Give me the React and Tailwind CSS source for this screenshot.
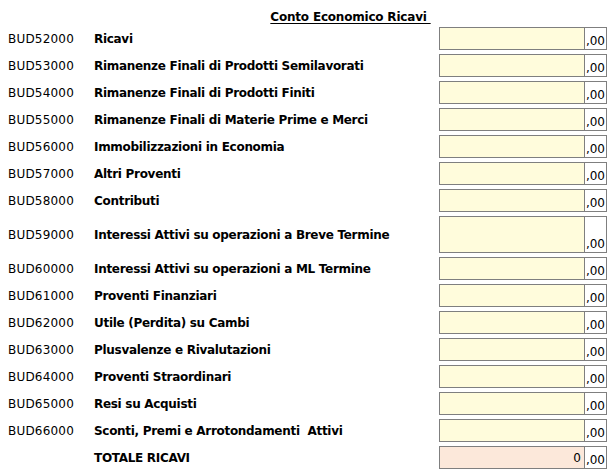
import React from 'react';

const voci = [
  { codice: 'BUD52000', descrizione: 'Ricavi' },
  { codice: 'BUD53000', descrizione: 'Rimanenze Finali di Prodotti Semilavorati' },
  { codice: 'BUD54000', descrizione: 'Rimanenze Finali di Prodotti Finiti' },
  { codice: 'BUD55000', descrizione: 'Rimanenze Finali di Materie Prime e Merci' },
  { codice: 'BUD56000', descrizione: 'Immobilizzazioni in Economia' },
  { codice: 'BUD57000', descrizione: 'Altri Proventi' },
  { codice: 'BUD58000', descrizione: 'Contributi' },
  { codice: 'BUD59000', descrizione: 'Interessi Attivi su operazioni a Breve Termine', alto: true },
  { codice: 'BUD60000', descrizione: 'Interessi Attivi su operazioni a ML Termine' },
  { codice: 'BUD61000', descrizione: 'Proventi Finanziari' },
  { codice: 'BUD62000', descrizione: 'Utile (Perdita) su Cambi' },
  { codice: 'BUD63000', descrizione: 'Plusvalenze e Rivalutazioni' },
  { codice: 'BUD64000', descrizione: 'Proventi Straordinari' },
  { codice: 'BUD65000', descrizione: 'Resi su Acquisti' },
  { codice: 'BUD66000', descrizione: 'Sconti, Premi e Arrotondamenti\u00a0 Attivi' },
];

const Importo = ({ valore = '', alto = false, totale = false }) => (
  <div
    className={`flex w-[168px] border border-[#7f7f7f] ${alto ? 'h-[37px]' : 'h-[23px]'}`}
  >
    <div
      className={`flex-1 flex items-center justify-end pr-[3px] border-r border-[#7f7f7f] ${
        totale ? 'bg-[#fce8da]' : 'bg-[#fffcdc]'
      }`}
    >
      {valore}
    </div>
    <div className="w-[21px] bg-white flex items-end justify-end pr-[1px] pb-[2px] leading-none">
      ,00
    </div>
  </div>
);

export default function App() {
  return (
    <div
      className="w-[614px] h-[475px] bg-white text-black text-[12px]"
      style={{ fontFamily: '"DejaVu Sans", Verdana, sans-serif' }}
    >
      {/* Titolo */}
      <div className="flex h-[25px] pr-[7px]">
        <div className="w-[94px]" />
        <div className="flex-1 flex justify-center pt-[8px]">
          <span className="font-bold tracking-[-0.2px] underline underline-offset-[2px]">
            Conto Economico Ricavi&nbsp;
          </span>
        </div>
      </div>

      {/* Voci */}
      {voci.map((v) => (
        <div
          key={v.codice}
          className={`flex items-center pr-[7px] ${v.alto ? 'h-[41px]' : 'h-[27px]'}`}
        >
          <div className="w-[94px] pl-[8px] tracking-[0.2px]">{v.codice}</div>
          <div className="flex-1 font-bold tracking-[-0.3px]">{v.descrizione}</div>
          <Importo alto={v.alto} />
        </div>
      ))}

      {/* Totale */}
      <div className="flex items-center h-[27px] pr-[7px]">
        <div className="w-[94px]" />
        <div className="flex-1 font-bold tracking-[-0.3px]">TOTALE RICAVI</div>
        <Importo valore="0" totale />
      </div>
    </div>
  );
}
